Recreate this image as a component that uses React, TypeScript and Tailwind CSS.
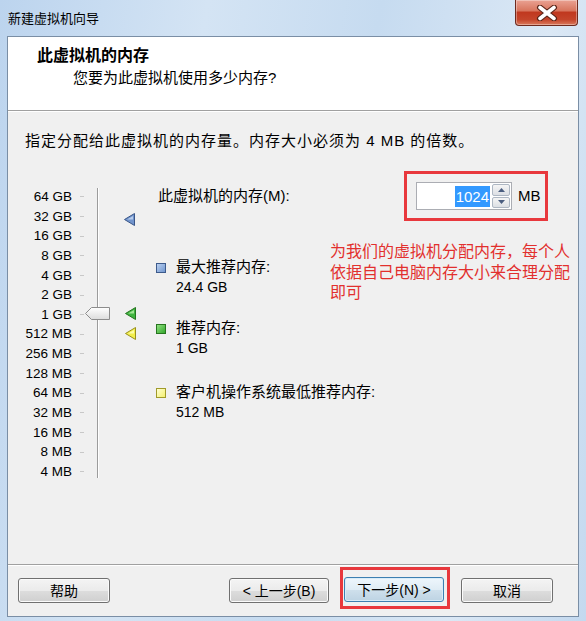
import React from "react";

const labels = ["64 GB","32 GB","16 GB","8 GB","4 GB","2 GB","1 GB","512 MB","256 MB","128 MB","64 MB","32 MB","16 MB","8 MB","4 MB"];

function Tri({ fill, stroke, light }: { fill: string; stroke: string; light: string }) {
  return (
    <svg width="11" height="13" viewBox="0 0 11 13">
      <polygon points="0.5,6.5 10.5,0.5 10.5,12.5" fill={fill} stroke={stroke} strokeWidth="1" />
      <polygon points="3,6.5 9,3 9,6.5" fill={light} opacity="0.8" />
    </svg>
  );
}

function Btn({ children, def }: { children: React.ReactNode; def?: boolean }) {
  return (
    <div
      className={
        "h-[25px] flex items-center justify-center rounded-[3px] border text-[14px] leading-[16px] " +
        (def
          ? "w-[100px] border-[#3c7fb1] bg-[linear-gradient(to_bottom,#eef6fc_0%,#dfecf5_50%,#cfe0ec_51%,#bdd3e3_100%)] shadow-[inset_0_0_0_1px_#d8ecf8]"
          : "border-[#707070] bg-[linear-gradient(to_bottom,#f4f4f4_0%,#ebebeb_50%,#dddddd_51%,#cfcfcf_100%)] shadow-[inset_0_0_0_1px_#fbfbfb]")
      }
    >
      {children}
    </div>
  );
}

export default function App() {
  return (
    <div className="w-[586px] h-[621px] flex flex-col overflow-hidden bg-[linear-gradient(100deg,#bcd4ee_0%,#d4e4f4_30%,#c6dbf0_55%,#dbe8f5_80%,#c4d9ef_100%)] font-['Liberation_Sans','Noto_Sans_CJK_SC',sans-serif] text-black">
      {/* title bar */}
      <div className="h-[36px] flex items-start shrink-0">
        <div className="pl-[8px] pt-[11px] text-[13px] leading-[16px]">新建虚拟机向导</div>
        <div className="ml-auto mr-[8px] w-[63px] h-[26px] rounded-b-[4px] border border-t-0 border-[#6e2a1e] bg-[linear-gradient(to_bottom,#eaa293_0%,#d8765f_42%,#c0381f_50%,#c4442a_78%,#da7a5c_100%)] flex items-center justify-center shadow-[inset_0_0_0_1px_rgba(255,255,255,0.35)]">
          <svg width="22" height="16" viewBox="0 0 22 16">
            <path d="M4 2.5 L18 13.5 M18 2.5 L4 13.5" stroke="#5a2418" strokeWidth="6" strokeLinecap="round" />
            <path d="M4 2.5 L18 13.5 M18 2.5 L4 13.5" stroke="#ffffff" strokeWidth="3.6" strokeLinecap="round" />
          </svg>
        </div>
      </div>

      {/* client area */}
      <div className="flex-1 mx-[7px] mb-[4px] border border-[#7a8ea5] flex flex-col bg-[#f0f0f0]">
        {/* header */}
        <div className="h-[74px] bg-white border-b border-[#a0a0a0] shrink-0">
          <div className="pl-[29px] pt-[10px] text-[16px] leading-[18px] font-bold">此虚拟机的内存</div>
          <div className="pl-[65px] mt-[4px] text-[15px] leading-[18px]">您要为此虚拟机使用多少内存?</div>
        </div>

        {/* body */}
        <div className="flex-1 flex flex-col border-t border-white">
          <div className="pl-[17px] pt-[20px] text-[15px] leading-[18px] tracking-[1px]">
            指定分配给此虚拟机的内存量。内存大小必须为 4 MB 的倍数。
          </div>

          <div className="relative mt-[21px] flex">
            {/* labels */}
            <div className="w-[64px] pt-[16px] flex flex-col">
              {labels.map((l) => (
                <div key={l} className="h-[19.65px] leading-[19.65px] text-right text-[13.5px]">
                  {l}
                </div>
              ))}
            </div>
            {/* ticks */}
            <div className="ml-[8px] w-[4px] pt-[16px] flex flex-col">
              {labels.map((l) => (
                <div key={l} className="h-[19.65px] flex items-center">
                  <div className="w-[4px] h-[1px] bg-[#c8c8c8]" />
                </div>
              ))}
            </div>
            {/* track area */}
            <div className="w-[72px] relative">
              <div className="absolute left-[13px] top-[17px] h-[290px] w-[1px] bg-[#9c9c9c]" />
              <div className="absolute left-[14px] top-[17px] h-[290px] w-[1px] bg-white" />
              <div className="absolute left-[1px] top-[136px]">
                <svg width="25" height="13" viewBox="0 0 25 13">
                  <defs>
                    <linearGradient id="th" x1="0" y1="0" x2="0" y2="1">
                      <stop offset="0" stopColor="#ffffff" />
                      <stop offset="1" stopColor="#dcdcdc" />
                    </linearGradient>
                  </defs>
                  <polygon points="0.5,6.5 6.5,0.5 24.5,0.5 24.5,12.5 6.5,12.5" fill="url(#th)" stroke="#8c8c8c" />
                </svg>
              </div>
              <div className="absolute left-[40px] top-[42px]">
                <Tri fill="#7194cc" stroke="#3a5688" light="#c9d9f2" />
              </div>
              <div className="absolute left-[41px] top-[136px]">
                <Tri fill="#3fb43f" stroke="#23741f" light="#b9f0a9" />
              </div>
              <div className="absolute left-[41px] top-[156px]">
                <Tri fill="#f2ee4a" stroke="#98901e" light="#ffffc0" />
              </div>
            </div>

            {/* right column */}
            <div className="flex-1 flex flex-col text-[14px]">
              <div className="h-[50px] flex items-center">
                <div className="pl-[2px] leading-[20px] text-[15px]">此虚拟机的内存(M):</div>
                <div className="ml-auto mr-[30px] w-[144px] h-[50px] border-[3px] border-[#e8383d] flex items-center pl-[9px]">
                  <div className="w-[96px] h-[28px] border border-[#abadb3] bg-white flex items-stretch">
                    <div className="flex-1 flex items-center justify-end pr-[1px]">
                      <span className="bg-[#3399ff] text-white text-[15px] leading-[21px] px-[1px]">1024</span>
                    </div>
                    <div className="w-[20px] flex flex-col gap-[1px] p-[1px]">
                      <div className="flex-1 border border-[#aeb7c3] rounded-[2px] bg-[linear-gradient(to_bottom,#f5f5f5,#dcdfe4)] flex items-center justify-center">
                        <svg width="7" height="4" viewBox="0 0 7 4"><polygon points="0,4 3.5,0 7,4" fill="#4b5e80" /></svg>
                      </div>
                      <div className="flex-1 border border-[#aeb7c3] rounded-[2px] bg-[linear-gradient(to_bottom,#f5f5f5,#dcdfe4)] flex items-center justify-center">
                        <svg width="7" height="4" viewBox="0 0 7 4"><polygon points="0,0 3.5,4 7,0" fill="#4b5e80" /></svg>
                      </div>
                    </div>
                  </div>
                  <div className="ml-[6px] leading-[20px] text-[15px]">MB</div>
                </div>
              </div>

              <div className="mt-[36px] flex">
                <div className="w-[10px] h-[10px] mt-[6px] border border-[#3d5b8c] bg-[linear-gradient(135deg,#b9cff0,#7297cf)]" />
                <div className="ml-[10px] leading-[20px]">
                  <div className="text-[15px]">最大推荐内存:</div>
                  <div>24.4 GB</div>
                </div>
              </div>
              <div className="mt-[21px] flex">
                <div className="w-[10px] h-[10px] mt-[6px] border border-[#27751f] bg-[linear-gradient(135deg,#8fe07f,#34a82e)]" />
                <div className="ml-[10px] leading-[20px]">
                  <div className="text-[15px]">推荐内存:</div>
                  <div>1 GB</div>
                </div>
              </div>
              <div className="mt-[24px] flex">
                <div className="w-[10px] h-[10px] mt-[6px] border border-[#a09a2a] bg-[linear-gradient(135deg,#ffffd0,#f4f070)]" />
                <div className="ml-[10px] leading-[20px]">
                  <div className="text-[15px]">客户机操作系统最低推荐内存:</div>
                  <div>512 MB</div>
                </div>
              </div>
            </div>

            {/* annotation */}
            <div className="absolute left-[322px] top-[71px] text-[16px] leading-[20.5px] text-[#e2302e]">
              <div>为我们的虚拟机分配内存，每个人</div>
              <div>依据自己电脑内存大小来合理分配</div>
              <div>即可</div>
            </div>
          </div>
        </div>

        {/* footer */}
        <div className="h-[52px] shrink-0 border-t border-[#a0a0a0] flex flex-col">
          <div className="border-t border-white flex items-start pt-[1px]">
            <div className="ml-[10px] mt-[11px] w-[92px]"><Btn>帮助</Btn></div>
            <div className="ml-[119px] mt-[11px] w-[100px]"><Btn>&lt; 上一步(B)</Btn></div>
            <div className="ml-[11px] border-[3px] border-[#e8383d] pl-[1px] pr-[3px] pt-[7px] pb-[4px]">
              <Btn def>下一步(N) &gt;</Btn>
            </div>
            <div className="ml-[11px] mt-[11px] w-[92px]"><Btn>取消</Btn></div>
          </div>
        </div>
      </div>
    </div>
  );
}
